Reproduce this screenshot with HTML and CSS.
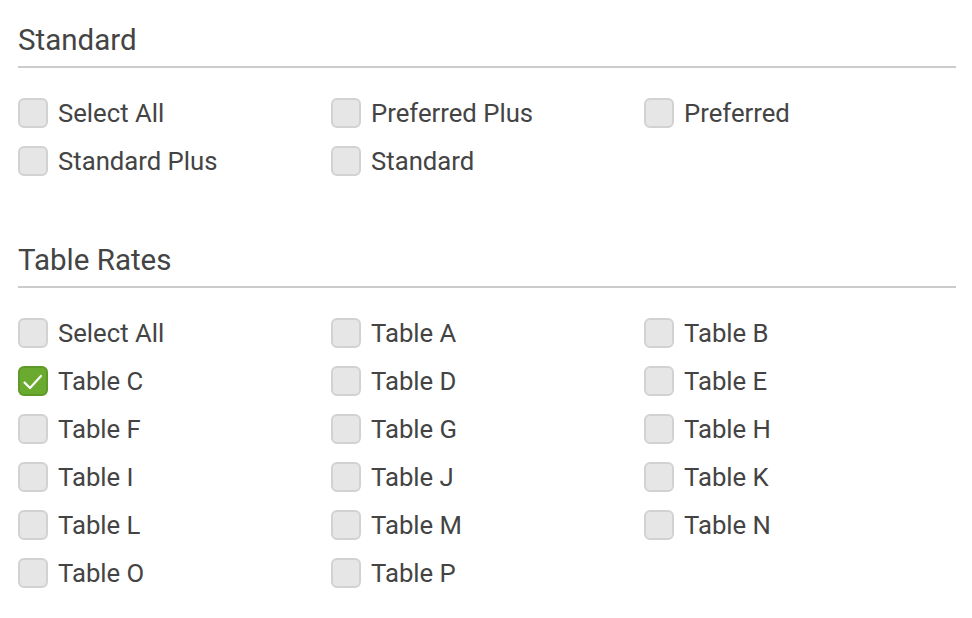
FILE: index.html
```html
<!DOCTYPE html>
<html>
<head>
<meta charset="utf-8">
<link rel="stylesheet" href="styles.css">
</head>
<body>
<div class="page">
  <section class="group">
    <h2 class="group-title">Standard</h2>
    <div class="options">
      <label class="opt"><span class="box"></span><span class="txt">Select All</span></label>
      <label class="opt"><span class="box"></span><span class="txt">Preferred Plus</span></label>
      <label class="opt"><span class="box"></span><span class="txt">Preferred</span></label>
      <label class="opt"><span class="box"></span><span class="txt">Standard Plus</span></label>
      <label class="opt"><span class="box"></span><span class="txt">Standard</span></label>
    </div>
  </section>
  <section class="group">
    <h2 class="group-title">Table Rates</h2>
    <div class="options">
      <label class="opt"><span class="box"></span><span class="txt">Select All</span></label>
      <label class="opt"><span class="box"></span><span class="txt">Table A</span></label>
      <label class="opt"><span class="box"></span><span class="txt">Table B</span></label>
      <label class="opt"><span class="box checked"><svg viewBox="0 0 30 30" width="30" height="30"><path d="M6.5 16.5 L12 22 L23 10" fill="none" stroke="#fff" stroke-width="2.2" stroke-linecap="round" stroke-linejoin="round"/></svg></span><span class="txt">Table C</span></label>
      <label class="opt"><span class="box"></span><span class="txt">Table D</span></label>
      <label class="opt"><span class="box"></span><span class="txt">Table E</span></label>
      <label class="opt"><span class="box"></span><span class="txt">Table F</span></label>
      <label class="opt"><span class="box"></span><span class="txt">Table G</span></label>
      <label class="opt"><span class="box"></span><span class="txt">Table H</span></label>
      <label class="opt"><span class="box"></span><span class="txt">Table I</span></label>
      <label class="opt"><span class="box"></span><span class="txt">Table J</span></label>
      <label class="opt"><span class="box"></span><span class="txt">Table K</span></label>
      <label class="opt"><span class="box"></span><span class="txt">Table L</span></label>
      <label class="opt"><span class="box"></span><span class="txt">Table M</span></label>
      <label class="opt"><span class="box"></span><span class="txt">Table N</span></label>
      <label class="opt"><span class="box"></span><span class="txt">Table O</span></label>
      <label class="opt"><span class="box"></span><span class="txt">Table P</span></label>
    </div>
  </section>
</div>
</body>
</html>
```
FILE: styles.css
```css
html, body {
  margin: 0;
  padding: 0;
  background: #fff;
}
body {
  font-family: Roboto, "Liberation Sans", Arial, sans-serif;
  color: #444;
}
.page {
  padding: 0 16px 0 18px;
}
.group {
  padding-top: 22px;
  padding-bottom: 35px;
}
.group-title {
  margin: 0 0 21px 0;
  font-size: 29.5px;
  font-weight: 400;
  line-height: 36px;
  color: #444;
}
.group-title::after {
  content: "";
  display: block;
  height: 2px;
  background: #cccccc;
  margin-top: 8px;
}
.options {
  display: grid;
  grid-template-columns: 313px 313px 1fr;
  grid-auto-rows: 48px;
}
.opt {
  display: flex;
  align-items: center;
  gap: 10px;
}
.box {
  box-sizing: border-box;
  width: 30px;
  height: 30px;
  border: 2px solid #d2d2d2;
  border-radius: 6px;
  background: #e6e6e6;
  flex: none;
  position: relative;
}
.box.checked {
  background: #6aaa2e;
  border-color: #5e9a27;
}
.box svg {
  position: absolute;
  left: -2px;
  top: -2px;
}
.txt {
  font-size: 25.7px;
  line-height: 30px;
  color: #444;
}
```
